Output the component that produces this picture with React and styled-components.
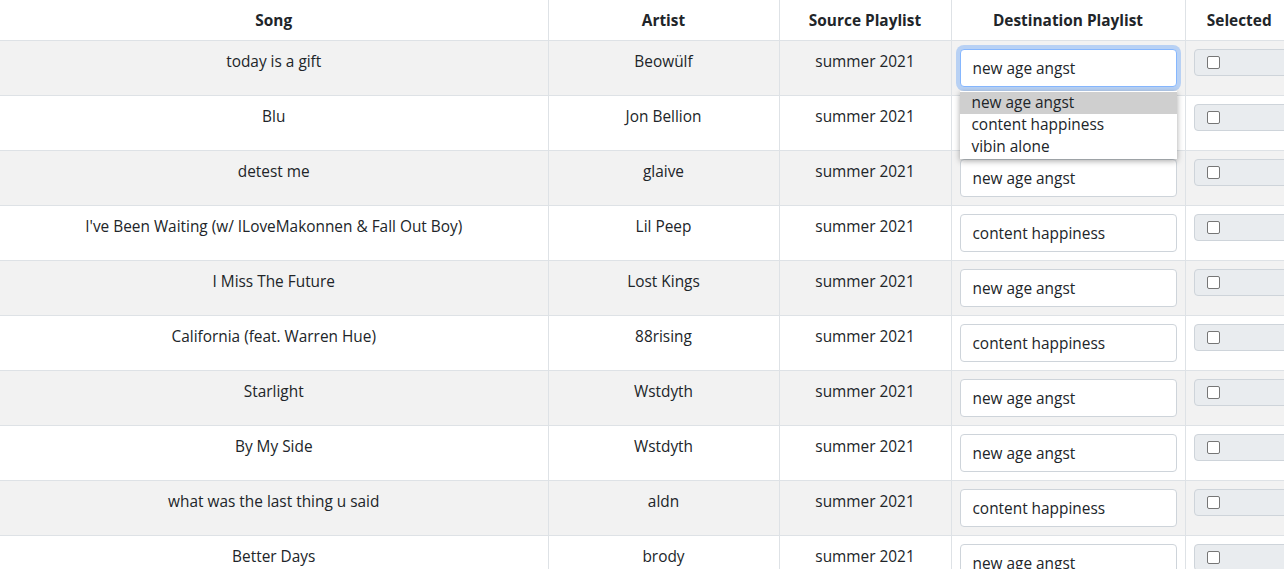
import React from 'react'
import styled, { createGlobalStyle } from 'styled-components'

const GlobalStyle = createGlobalStyle`
  html, body {
    margin: 0;
    padding: 0;
    overflow: hidden;
    background: #fff;
  }
  body {
    font-family: "Open Sans", "Noto Sans", sans-serif;
    font-size: 15.4px;
    line-height: 24px;
    color: #212529;
  }
`

const Table = styled.table`
  border-collapse: collapse;
  table-layout: fixed;
  width: 1293px;
`

const HeadCell = styled.th`
  box-sizing: border-box;
  width: ${p => p.w}px;
  padding: 8px 8px 6px;
  line-height: 26px;
  font-weight: 700;
  text-align: center;
  white-space: nowrap;
  border-bottom: 1px solid #dee2e6;
  border-right: 1px solid #dee2e6;
  &:last-child {
    border-right: none;
  }
`

const Row = styled.tr`
  background: ${p => (p.striped ? '#f2f2f2' : '#fff')};
`

const Cell = styled.td`
  padding: 8px;
  height: 38px;
  line-height: 26px;
  vertical-align: top;
  text-align: center;
  border-bottom: 1px solid #dee2e6;
  border-right: 1px solid #dee2e6;
  white-space: nowrap;
  &:last-child {
    border-right: none;
  }
`

const InputWrap = styled.div`
  position: relative;
  line-height: 24px;
`

const TextInput = styled.div`
  box-sizing: border-box;
  height: 38px;
  padding: 7px 12px 5px;
  text-align: left;
  background: #fff;
  border: 1px solid ${p => (p.focused ? '#86b7fe' : '#ced4da')};
  border-radius: 4px;
  box-shadow: ${p => (p.focused ? '0 0 0 4px rgba(13, 110, 253, 0.25)' : 'none')};
`

const Suggestions = styled.ul`
  position: absolute;
  top: 42px;
  left: 0;
  right: 0;
  margin: 0;
  padding: 1px 0;
  list-style: none;
  text-align: left;
  background: #fff;
  box-shadow: 0 2px 6px rgba(0, 0, 0, 0.35);
  z-index: 5;
`

const Suggestion = styled.li`
  height: 22px;
  line-height: 22px;
  padding: 0 12px;
  background: ${p => (p.active ? '#cfcfcf' : 'transparent')};
`

const CheckGroup = styled.div`
  box-sizing: border-box;
  width: 140px;
  height: 27px;
  padding: 6px 12px;
  display: flex;
  align-items: center;
  background: #e9ecef;
  border: 1px solid #ced4da;
  border-radius: 4px;
`

const Box = styled.span`
  box-sizing: border-box;
  width: 13px;
  height: 13px;
  background: #fff;
  border: 1px solid #767676;
  border-radius: 2px;
`

const songs = [
  ['today is a gift', 'Beowülf', 'new age angst'],
  ['Blu', 'Jon Bellion', 'new age angst'],
  ['detest me', 'glaive', 'new age angst'],
  ["I've Been Waiting (w/ ILoveMakonnen & Fall Out Boy)", 'Lil Peep', 'content happiness'],
  ['I Miss The Future', 'Lost Kings', 'new age angst'],
  ['California (feat. Warren Hue)', '88rising', 'content happiness'],
  ['Starlight', 'Wstdyth', 'new age angst'],
  ['By My Side', 'Wstdyth', 'new age angst'],
  ['what was the last thing u said', 'aldn', 'content happiness'],
  ['Better Days', 'brody', 'new age angst'],
]

const playlists = ['new age angst', 'content happiness', 'vibin alone']

export default function App() {
  return (
    <>
      <GlobalStyle />
      <Table>
        <thead>
          <tr>
            <HeadCell w={548}>Song</HeadCell>
            <HeadCell w={231}>Artist</HeadCell>
            <HeadCell w={172}>Source Playlist</HeadCell>
            <HeadCell w={234}>Destination Playlist</HeadCell>
            <HeadCell w={108}>Selected</HeadCell>
          </tr>
        </thead>
        <tbody>
          {songs.map(([song, artist, dest], i) => (
            <Row key={song} striped={i % 2 === 0}>
              <Cell>{song}</Cell>
              <Cell>{artist}</Cell>
              <Cell>summer 2021</Cell>
              <Cell>
                <InputWrap>
                  <TextInput focused={i === 0}>{dest}</TextInput>
                  {i === 0 && (
                    <Suggestions>
                      {playlists.map((p, j) => (
                        <Suggestion key={p} active={j === 0}>{p}</Suggestion>
                      ))}
                    </Suggestions>
                  )}
                </InputWrap>
              </Cell>
              <Cell>
                <CheckGroup>
                  <Box />
                </CheckGroup>
              </Cell>
            </Row>
          ))}
        </tbody>
      </Table>
    </>
  )
}
